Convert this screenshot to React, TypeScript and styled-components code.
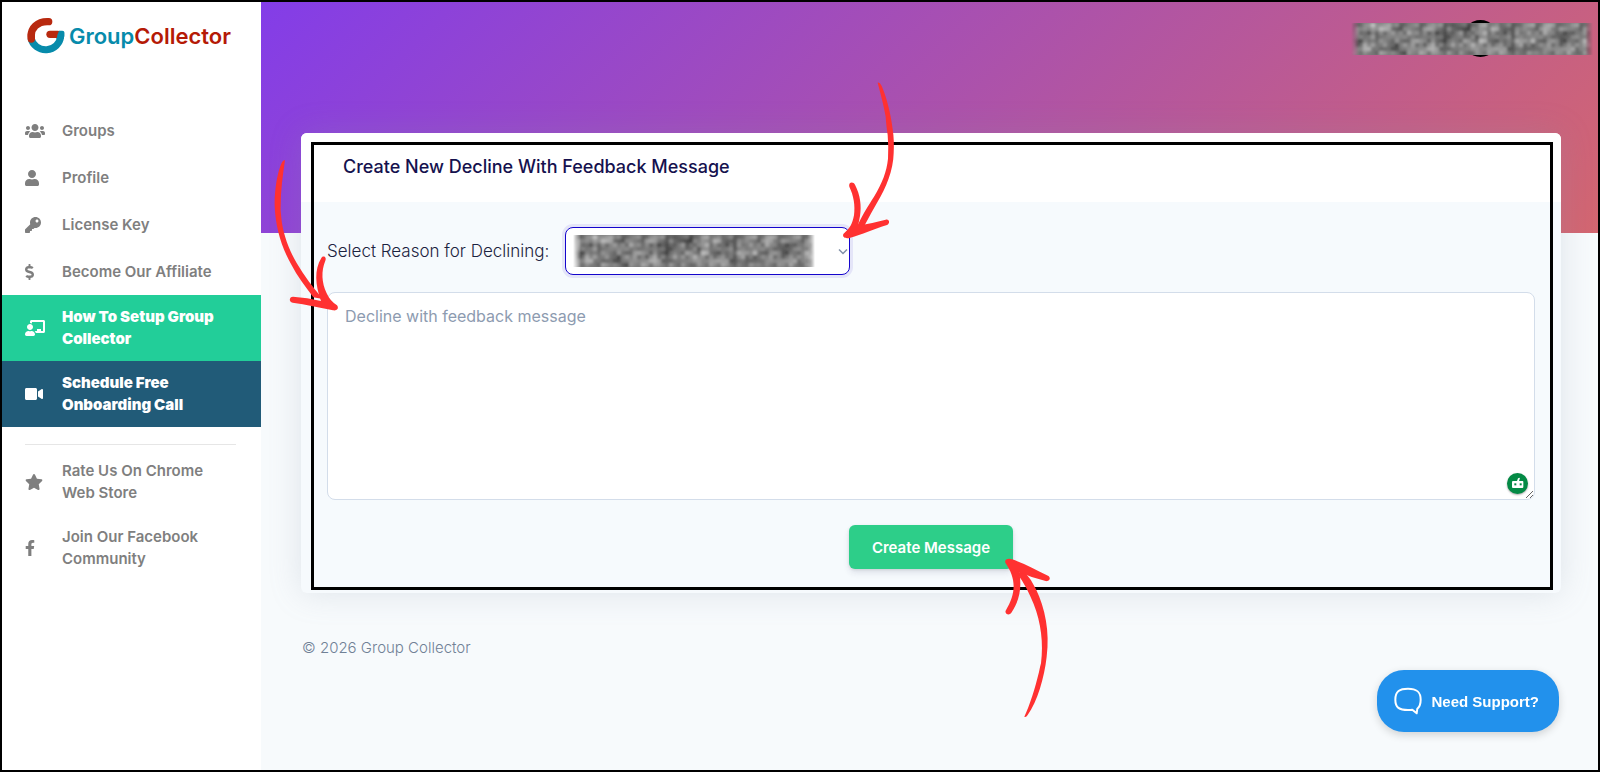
import React from "react";
import styled, { createGlobalStyle } from "styled-components";
import { IconContext } from "react-icons";
import {
  FaChalkboardTeacher,
  FaDollarSign,
  FaFacebookF,
  FaKey,
  FaStar,
  FaUser,
  FaUsers,
  FaVideo,
} from "react-icons/fa";

const GlobalStyle = createGlobalStyle`
  *, *::before, *::after { box-sizing: border-box; }
  body {
    margin: 0;
    font-family: Inter, "Liberation Sans", sans-serif;
    background: #f7fafc;
    color: #1b2340;
  }
  button, select, textarea { font-family: inherit; }
`;

const Frame = styled.div`
  display: flex;
  min-height: 100vh;
  border: 2px solid #000;
`;

/* Sidebar */

const Sidebar = styled.aside`
  flex: 0 0 259px;
  background: #fff;
`;

const Brand = styled.a`
  display: flex;
  align-items: center;
  gap: 4px;
  height: 40px;
  margin: 14px 0 51px 25px;
  text-decoration: none;
  font-size: 22px;
  font-weight: 600;
`;

const BrandWord = styled.span<{ $color: string }>`
  color: ${(p) => p.$color};
`;

const NavList = styled.ul`
  list-style: none;
  margin: 0;
  padding: 0;
`;

const NavLink = styled.a<{ $fill?: string }>`
  display: grid;
  grid-template-columns: 37px 1fr;
  align-items: center;
  min-height: 47px;
  padding: 11px 24px 11px 23px;
  font-size: 15px;
  line-height: 22px;
  text-decoration: none;
  font-weight: ${(p) => (p.$fill ? 900 : 600)};
  color: ${(p) => (p.$fill ? "#fff" : "#7f7f7f")};
  background: ${(p) => p.$fill ?? "transparent"};

  svg {
    display: block;
    width: 20px;
    height: 16px;
  }
`;

const Divider = styled.hr`
  margin: 17px 25px 4px 23px;
  border: 0;
  border-top: 1px solid #e6e6e6;
`;

/* Main column */

const Main = styled.main`
  flex: 1;
  min-width: 0;
`;

const Hero = styled.header`
  display: flex;
  justify-content: flex-end;
  height: 231px;
  padding: 18px 5px 0;
  background: linear-gradient(135deg, #833de8, #d36670);
`;

const Account = styled.div`
  position: relative;
  display: flex;
  align-items: center;
  height: 37px;
`;

const Avatar = styled.span`
  position: absolute;
  left: 111px;
  top: 0;
  width: 37px;
  height: 37px;
  border-radius: 50%;
  background: #000;
`;

const MosaicSvg = styled.svg`
  position: relative;
  display: block;
  width: 242px;
  height: 32px;
  mask-image: linear-gradient(90deg, transparent, #000 8px, #000 234px, transparent);
`;

const Content = styled.div`
  margin: -100px 37px 0 0;
  padding: 0 0 0 40px;
`;

const Card = styled.section`
  position: relative;
  border-radius: 6px;
  background: #f6fafd;
  box-shadow: 0 0 32px rgba(136, 152, 170, 0.22);
`;

const Highlight = styled.div`
  position: absolute;
  inset: 9px 8px 3px 10px;
  border: 3px solid #000;
  pointer-events: none;
`;

const CardHeader = styled.div`
  padding: 20px 42px 22px;
  border-radius: 6px 6px 0 0;
  background: #fff;
`;

const CardTitle = styled.h1`
  margin: 0;
  font-size: 18px;
  line-height: 27px;
  font-weight: 500;
  color: #15114e;
`;

const Form = styled.form`
  display: flex;
  flex-direction: column;
  padding: 25px 26px 24px;
`;

const Field = styled.div`
  display: flex;
  align-items: center;
  gap: 16px;
  margin-bottom: 17px;
`;

const FieldLabel = styled.label`
  font-size: 17px;
  line-height: 26px;
  font-weight: 300;
`;

const SelectBox = styled.div`
  position: relative;
  width: 285px;
`;

const Select = styled.select`
  display: block;
  appearance: none;
  width: 100%;
  height: 48px;
  border: 1px solid #1505cc;
  border-radius: 8px;
  background: #fff;
  box-shadow: 0 0 0 3px #e4e5f8;
  outline: none;
`;

const SelectValue = styled.div`
  position: absolute;
  left: 8px;
  top: 8px;
  pointer-events: none;
`;

const Chevron = styled.svg`
  position: absolute;
  right: 2px;
  top: 21px;
  width: 10px;
  height: 7px;
  pointer-events: none;
`;

const MessageBox = styled.div`
  position: relative;
  margin-bottom: 25px;
`;

const Message = styled.textarea`
  display: block;
  width: 100%;
  height: 208px;
  padding: 10px 17px;
  border: 1px solid #d3ddea;
  border-radius: 8px;
  background: #fff;
  font-size: 16px;
  line-height: 26px;
  color: #1b2340;
  resize: vertical;
  outline: none;

  &::placeholder {
    color: #8d9bb0;
    opacity: 1;
  }
`;

const AssistantButton = styled.button`
  position: absolute;
  right: 7px;
  bottom: 6px;
  width: 21px;
  height: 21px;
  padding: 0;
  border: 0;
  border-radius: 50%;
  background: #038a45;
  box-shadow: 0 1px 2px rgba(0, 0, 0, 0.35);

  svg {
    display: block;
    width: 21px;
    height: 21px;
  }
`;

const SubmitBox = styled.div`
  position: relative;
  align-self: center;
`;

const Submit = styled.button`
  display: block;
  height: 44px;
  padding: 0 23px;
  border: 0;
  border-radius: 6px;
  background: #2dce89;
  box-shadow: 0 4px 6px rgba(50, 50, 93, 0.11), 0 1px 3px rgba(0, 0, 0, 0.1);
  color: #fff;
  font-size: 15px;
  font-weight: 600;
`;

const ArrowSvg = styled.svg<{ $left: number; $top: number }>`
  position: absolute;
  z-index: 2;
  left: ${(p) => p.$left}px;
  top: ${(p) => p.$top}px;
  pointer-events: none;
`;

const Footer = styled.footer`
  padding: 44px 1px;
  font-size: 15px;
  line-height: 22px;
  font-weight: 300;
  color: #708196;
`;

const Support = styled.button`
  position: fixed;
  right: 41px;
  bottom: 40px;
  display: flex;
  align-items: center;
  gap: 10px;
  height: 62px;
  padding: 0 20px 0 17px;
  border: 0;
  border-radius: 27px;
  background: #2291ec;
  box-shadow: 0 3px 8px rgba(0, 0, 0, 0.16);
  color: #fff;
  font-size: 15px;
  font-weight: 700;

  && {
    font-family: "Liberation Sans", sans-serif;
  }
`;

const mosaicRows = [
  "469844557542247734465865653",
  "535654754235248534754742473",
  "346553575325658436783463482",
  "477525657556675654644655683",
  "545743675665466665457556462",
];

const CELL = 4;
const cellColumns = Array.from({ length: 61 }, (_, i) => i);
const cellLines = Array.from({ length: 8 }, (_, i) => i);

/* Base tone from the coarse rows, with a repeatable variation for each small cell. */
function cellShade(x: number, y: number) {
  const row = mosaicRows[Math.floor((y * 5) / 8)];
  const base = Number(row[Math.floor((x * 27) / 61)]);
  const variation = ((x * 37 + y * 53 + x * y * 11) % 17) - 8;
  return Math.round(64 + base * 12 + variation * 4);
}

function Mosaic({ id }: { id: string }) {
  return (
    <MosaicSvg viewBox="0 0 242 32" aria-hidden="true">
      <defs>
        <filter id={id} x="0" y="0" width="1" height="1">
          <feGaussianBlur stdDeviation="1.6" />
        </filter>
      </defs>
      <rect width="242" height="32" fill="#7a7a7a" />
      <g filter={`url(#${id})`}>
        {cellLines.map((y) =>
          cellColumns.map((x) => {
            const shade = cellShade(x, y);
            return (
              <rect
                key={`${x}-${y}`}
                x={x * CELL}
                y={y * CELL}
                width={CELL}
                height={CELL}
                fill={`rgb(${shade},${shade},${shade})`}
              />
            );
          }),
        )}
      </g>
    </MosaicSvg>
  );
}

function Logo() {
  return (
    <svg width="38" height="38" viewBox="0 0 114 114" fill="none" aria-hidden="true">
      <path d="M12 63 A45 44 0 0 0 101 57 V44" stroke="#078bab" strokeWidth="21" />
      <path d="M13 63 C9 34 32 12 65 14" stroke="#b8290f" strokeWidth="22" strokeLinecap="round" />
      <path d="M13 52 V66" stroke="#b8290f" strokeWidth="22" strokeLinecap="round" />
      <path d="M69 52 H92" stroke="#b8290f" strokeWidth="22" strokeLinecap="round" />
      <path d="M96 41 H106 Q112 41 112 47 V57 L110 66 H88 Q91 60 91 54Z" fill="#078bab" />
    </svg>
  );
}

function SelectArrow() {
  return (
    <ArrowSvg $left={235} $top={-167} width="130" height="200" viewBox="0 0 390 600" aria-hidden="true">
      <g fill="#ff3131">
        <path d="M233 68 Q239 66 245 78 C256 102 272 155 278 208 Q283 240 281 280 C280 330 258 385 232 427 Q214 458 194 496 L170 502 C186 466 207 434 222 410 C247 368 260 335 264 296 Q266 260 263 225 Q258 190 257 170 C250 130 240 95 233 68Z" />
        <path d="M130 522 C150 505 157 492 162 466 C166 436 161 407 148 380 C144 366 160 363 165 374 C181 405 185 438 180 468 Q177 485 174 497 Q216 490 257 479 C269 476 271 491 261 495 C222 507 184 524 151 533 C138 537 126 533 130 522Z" />
      </g>
    </ArrowSvg>
  );
}

function MessageArrow() {
  return (
    <ArrowSvg $left={-67} $top={-143} width="150" height="190" viewBox="0 0 450 570" aria-hidden="true">
      <g fill="#ff3131">
        <path d="M75 34 Q70 32 66 40 C52 68 43 125 44 170 C46 230 63 292 93 345 C112 382 136 413 160 445 L188 450 C158 414 132 380 110 342 C85 300 68 250 64 207 L62 185 C61 130 68 80 75 34Z" />
        <path d="M184 327 C190 317 201 325 196 335 C183 367 185 400 200 433 Q210 456 231 469 C238 479 230 486 219 484 C178 475 138 467 98 461 C86 459 87 443 99 443 Q142 446 183 456 C166 408 162 362 184 327Z" />
      </g>
    </ArrowSvg>
  );
}

function SubmitArrow() {
  return (
    <ArrowSvg $left={-19} $top={-15} width="250" height="220" viewBox="0 0 750 660" aria-hidden="true">
      <g fill="#ff3131">
        <path d="M583 620 Q588 623 593 615 C622 575 643 502 650 440 C660 365 645 295 618 238 Q604 208 582 184 L560 188 C582 218 598 249 611 282 C633 338 641 400 633 460 Q630 470 627 486 C615 535 600 584 583 620Z" />
        <path d="M526 158 C523 148 534 144 546 148 C584 161 616 179 654 197 C664 202 659 216 647 213 Q607 204 568 187 C575 229 571 267 545 307 C539 319 523 312 527 302 C559 249 559 205 526 158Z" />
      </g>
    </ArrowSvg>
  );
}

type NavItem = { label: string; icon: React.ReactNode; fill?: string };

const mainLinks: NavItem[] = [
  { label: "Groups", icon: <FaUsers /> },
  { label: "Profile", icon: <FaUser /> },
  { label: "License Key", icon: <FaKey /> },
  { label: "Become Our Affiliate", icon: <FaDollarSign /> },
  { label: "How To Setup Group Collector", icon: <FaChalkboardTeacher />, fill: "#22ce99" },
  { label: "Schedule Free Onboarding Call", icon: <FaVideo />, fill: "#215b78" },
];

const communityLinks: NavItem[] = [
  { label: "Rate Us On Chrome Web Store", icon: <FaStar /> },
  { label: "Join Our Facebook Community", icon: <FaFacebookF /> },
];

const navIconContext = { attr: { preserveAspectRatio: "xMinYMid" } };

function Nav({ items }: { items: NavItem[] }) {
  return (
    <IconContext.Provider value={navIconContext}>
      <NavList>
        {items.map((item) => (
          <li key={item.label}>
            <NavLink href="#" $fill={item.fill}>
              {item.icon}
              <span>{item.label}</span>
            </NavLink>
          </li>
        ))}
      </NavList>
    </IconContext.Provider>
  );
}

export default function App() {
  return (
    <>
      <GlobalStyle />
      <Frame>
        <Sidebar>
          <Brand href="#">
            <Logo />
            <span>
              <BrandWord $color="#078bab">Group</BrandWord>
              <BrandWord $color="#b51a06">Collector</BrandWord>
            </span>
          </Brand>
          <nav>
            <Nav items={mainLinks} />
            <Divider />
            <Nav items={communityLinks} />
          </nav>
        </Sidebar>

        <Main>
          <Hero>
            <Account>
              <Avatar />
              <Mosaic id="account-blur" />
            </Account>
          </Hero>
          <Content>
            <Card>
              <CardHeader>
                <CardTitle>Create New Decline With Feedback Message</CardTitle>
              </CardHeader>
              <Form onSubmit={(e) => e.preventDefault()}>
                <Field>
                  <FieldLabel htmlFor="reason">Select Reason for Declining:</FieldLabel>
                  <SelectBox>
                    <Select id="reason" />
                    <SelectValue>
                      <Mosaic id="reason-blur" />
                    </SelectValue>
                    <Chevron viewBox="0 0 10 7" fill="none" aria-hidden="true">
                      <path d="M1 1.5 L5 5.5 L9 1.5" stroke="#8090a8" strokeWidth="1.5" />
                    </Chevron>
                    <SelectArrow />
                  </SelectBox>
                </Field>
                <MessageBox>
                  <Message aria-label="Decline with feedback message" placeholder="Decline with feedback message" />
                  <AssistantButton type="button" aria-label="Writing assistant">
                    <svg viewBox="0 0 63 63" aria-hidden="true">
                      <path d="M18 24 H30 L33 16 L39 14 L36 24 H47 Q49 24 49 27 V42 Q49 45 46 45 H18 Q15 45 15 42 V27 Q15 24 18 24Z" fill="#fff" />
                      <rect x="22" y="31" width="6" height="6" fill="#038a45" />
                      <rect x="38" y="31" width="6" height="6" fill="#038a45" />
                    </svg>
                  </AssistantButton>
                  <MessageArrow />
                </MessageBox>
                <SubmitBox>
                  <Submit type="submit">Create Message</Submit>
                  <SubmitArrow />
                </SubmitBox>
              </Form>
              <Highlight />
            </Card>
            <Footer>© 2026 Group Collector</Footer>
          </Content>
        </Main>
      </Frame>
      <Support type="button">
        <svg width="28" height="28" viewBox="0 0 84 84" fill="none" aria-hidden="true">
          <path
            d="M42 5 C67 5 80 13 80 38 C80 51 76 60 70 65 L68 79 L55 68 Q49 69 42 69 C16 69 4 62 4 38 C4 12 17 5 42 5Z"
            stroke="#fff"
            strokeWidth="6"
            strokeLinejoin="round"
          />
        </svg>
        Need Support?
      </Support>
    </>
  );
}
